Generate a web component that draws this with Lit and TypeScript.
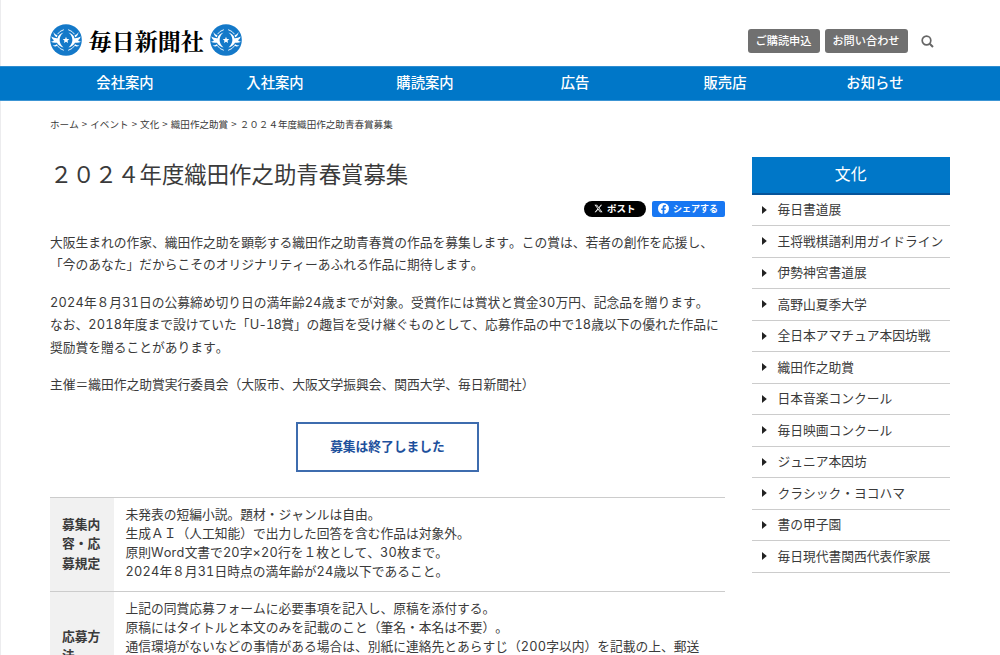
import { LitElement, html, svg, css } from "lit";
import { customElement } from "lit/decorators.js";

const NAV = ["会社案内", "入社案内", "購読案内", "広告", "販売店", "お知らせ"];
const SIDE = [
  "毎日書道展",
  "王将戦棋譜利用ガイドライン",
  "伊勢神宮書道展",
  "高野山夏季大学",
  "全日本アマチュア本因坊戦",
  "織田作之助賞",
  "日本音楽コンクール",
  "毎日映画コンクール",
  "ジュニア本因坊",
  "クラシック・ヨコハマ",
  "書の甲子園",
  "毎日現代書関西代表作家展",
];
const PARAS = [
  [
    "大阪生まれの作家、織田作之助を顕彰する織田作之助青春賞の作品を募集します。この賞は、若者の創作を応援し、",
    "「今のあなた」だからこそのオリジナリティーあふれる作品に期待します。",
  ],
  [
    "2024年８月31日の公募締め切り日の満年齢24歳までが対象。受賞作には賞状と賞金30万円、記念品を贈ります。",
    "なお、2018年度まで設けていた「U-18賞」の趣旨を受け継ぐものとして、応募作品の中で18歳以下の優れた作品に",
    "奨励賞を贈ることがあります。",
  ],
  ["主催＝織田作之助賞実行委員会（大阪市、大阪文学振興会、関西大学、毎日新聞社）"],
];
const TABLE = [
  {
    head: ["募集内", "容・応", "募規定"],
    body: [
      "未発表の短編小説。題材・ジャンルは自由。",
      "生成ＡＩ（人工知能）で出力した回答を含む作品は対象外。",
      "原則Word文書で20字×20行を１枚として、30枚まで。",
      "2024年８月31日時点の満年齢が24歳以下であること。",
    ],
  },
  {
    head: ["応募方", "法"],
    body: [
      "上記の同賞応募フォームに必要事項を記入し、原稿を添付する。",
      "原稿にはタイトルと本文のみを記載のこと（筆名・本名は不要）。",
      "通信環境がないなどの事情がある場合は、別紙に連絡先とあらすじ（200字以内）を記載の上、郵送",
    ],
  },
];

// Half-width runs get their own span so digits keep one wide advance.
const mixed = (s: string) =>
  s.split(/([A-Za-z0-9×-]+)/).map((part, i) => {
    if (i % 2 === 0) return part;
    const kind = /^[A-Z][a-z]/.test(part) ? "word" : part.startsWith("U") ? "num tight" : "num";
    return html`<span class=${kind}>${part}</span>`;
  });

const emblem = () => html`<svg class="emblem" viewBox="0 0 32 32">
  <circle cx="16" cy="16" r="15.8" fill="#1479c9" />
  ${[1, -1].map(
    (d) => svg`<g transform="translate(16 16) scale(${d} 1) translate(-16 -16)" fill="#fff">
      <path d="M1.200 12.500Q4.500 14.500 7.500 14.300Q8.500 10 13.500 8.600Q9.800 11.500 9.600 16Q9.800 20.500 13.500 23.400Q8.500 22 7 18.700Q3.500 19.300 .9 17.800Q3 17.300 4 16.300Q2 15 1.200 12.500Z"/>
      <path d="M3.400 8Q5 11 7.500 11.600L6.800 13.200Q4 12 3.400 8Z"/>
      <path d="M2.600 21.500Q5 21.600 6.800 20.200L8 21.600Q5.500 23.200 2.600 21.500Z"/>
      <path d="M13.800 5.700Q9.500 7 7.500 10.200" fill="none" stroke="#fff" stroke-width=".9"/>
      <path d="M13.800 26.300Q9.500 25 7.500 21.800" fill="none" stroke="#fff" stroke-width=".9"/>
    </g>`
  )}
  <path
    d="M16 12.700l.9 2.200 2.400.2-1.800 1.600.6 2.300-2.100-1.200-2.100 1.200.6-2.300-1.800-1.600 2.400-.2z"
    fill="#fff"
  />
</svg>`;

@customElement("app-root")
export class AppRoot extends LitElement {
  static styles = css`
    :host {
      display: block;
      height: 655px;
      overflow: hidden;
      box-sizing: border-box;
      background: #fff;
      color: #3a3a3a;
      font: 12.76px/22.5px "Noto Sans CJK JP", sans-serif;
      text-spacing-trim: space-all;
      font-kerning: none;
      white-space: nowrap;
    }
    .page { border-left: 1px solid #ececee; height: 655px; }
    .top {
      height: 65.5px;
      box-sizing: border-box;
      padding: 15px 66.500px 0 49px;
      display: flex;
      justify-content: space-between;
      align-items: center;
    }
    .logo { display: flex; align-items: center; color: #000; }
    .emblem { width: 32px; height: 32px; display: block; }
    .brand {
      font-size: 23.1px;
      line-height: 32px;
      font-weight: 700;
      font-family: "Noto Serif CJK JP", "Noto Sans CJK JP", serif;
      width: 115px;
      margin: 0 6.500px 0 6.500px;
    }
    .tools { display: flex; align-items: center; gap: 5px; padding-top: 2px; }
    .btn {
      height: 24px;
      line-height: 22px;
      border-radius: 3px;
      background: #707070;
      color: #fff;
      font-size: 11.2px;
      font-weight: 500;
      text-align: center;
      width: 72px;
    }
    .btn.wide { width: 83px; }
    .search { width: 13px; height: 13px; margin-left: 8px; display: block; }
    nav {
      display: grid;
      grid-template-columns: repeat(6, 150px);
      justify-content: center;
      margin-left: -1px;
      height: 35px;
      box-sizing: border-box;
      background: #0077c8;
      border-top: 1px solid #2f8dd0;
      border-bottom: 1px solid #3c95d4;
      color: #fff;
      font-size: 14.35px;
      font-weight: 500;
      line-height: 30px;
      text-align: center;
    }
    .crumbs {
      font-size: 9.57px;
      line-height: 14px;
      padding: 16px 0 1px 49px;
      display: flex;
      gap: 2.450px;
    }
    .gt { width: 6.700px; text-align: center; }
    .cols { display: flex; justify-content: space-between; padding: 25px 50px 0 49px; }
    main { width: 675px; }
    h1 { margin: 0; font-size: 22.4px; line-height: 32px; padding-bottom: 4px; font-weight: 400; }
    .share { display: flex; justify-content: flex-end; gap: 6px; margin: 8px 0 14px; }
    .x, .fb {
      display: flex;
      align-items: center;
      height: 16px;
      color: #fff;
      font-size: 9.500px;
      line-height: 15px;
      font-weight: 700;
      box-sizing: border-box;
    }
    .x { width: 62px; border-radius: 8px; background: #000; padding-left: 10px; gap: 4px; }
    .fb { width: 73px; border-radius: 2px; background: #1877f2; padding-left: 6px; gap: 4px; font-size: 9px; }
    .x svg { width: 9px; height: 9px; }
    .fb svg { width: 11px; height: 11px; }
    p { margin: 0 0 15px; }
    .num, .word { font-family: Inter, sans-serif; line-height: 1; letter-spacing: 0.200px; }
    .num { font-feature-settings: "tnum"; }
    .tight { letter-spacing: -0.700px; }
    .closed {
      width: 183px;
      height: 50px;
      box-sizing: border-box;
      margin: 26px auto 25px;
      border: 2px solid #3e6cae;
      color: #1d509c;
      font-weight: 700;
      line-height: 44px;
      text-align: center;
    }
    .row { display: flex; border-top: 1px solid #ccc; line-height: 19.150px; }
    .th {
      width: 64px;
      background: #f1f1f1;
      font-weight: 700;
      display: flex;
      flex-direction: column;
      justify-content: center;
      padding: 0 0 2px 12px;
      box-sizing: border-box;
    }
    .td { padding: 6.500px 0 9.900px 11.500px; }
    .row:last-child .td { padding-bottom: 45px; }
    aside { width: 198.500px; }
    .sideHead {
      height: 38px;
      box-sizing: border-box;
      background: #0077c8;
      border-bottom: 2px solid #06549a;
      color: #fff;
      font-size: 15.950px;
      line-height: 33px;
      text-align: center;
    }
    .item {
      display: flex;
      align-items: center;
      height: 31.500px;
      box-sizing: border-box;
      border-bottom: 1px solid #ccc;
      padding-left: 10px;
      line-height: 22px;
    }
    .item span { padding-bottom: 1.500px; }
    .item svg { width: 5px; height: 8px; margin-right: 11px; }
  `;

  render() {
    const crumbs = ["ホーム", "イベント", "文化", "織田作之助賞", "２０２４年度織田作之助青春賞募集"];
    return html`<div class="page">
      <header class="top">
        <div class="logo">${emblem()}<span class="brand">毎日新聞社</span>${emblem()}</div>
        <div class="tools">
          <span class="btn">ご購読申込</span>
          <span class="btn wide">お問い合わせ</span>
          <svg class="search" viewBox="0 0 13 13" fill="none" stroke="#666">
            <circle cx="5.500" cy="5.500" r="4.300" stroke-width="1.700" />
            <path d="M8.700 8.700L12 12" stroke-width="2" />
          </svg>
        </div>
      </header>
      <nav>${NAV.map((n) => html`<span>${n}</span>`)}</nav>
      <div class="crumbs">
        ${crumbs.map((c, i) => html`${i ? html`<span class="gt">&gt;</span>` : ""}<span>${c}</span>`)}
      </div>
      <div class="cols">
        <main>
          <h1>２０２４年度織田作之助青春賞募集</h1>
          <div class="share">
            <span class="x"
              ><svg viewBox="0 0 24 24" fill="#fff">
                <path
                  d="M18.200 2.200h3.400l-7.300 8.300 8.500 11.300h-6.700l-5.200-6.800-6 6.800H1.600l7.700-8.900L1.200 2.200H8l4.700 6.200zm-1.100 17.600h1.800L7 4.100H5z"
                /></svg
              >ポスト</span
            >
            <span class="fb"
              ><svg viewBox="0 0 24 24">
                <circle cx="12" cy="12" r="12" fill="#fff" />
                <path
                  d="M10 24v-8.500H7V12h3V9.400C10 6.300 11.800 4.600 14.600 4.600c1.300 0 2.700.25 2.700.25v3h-1.500c-1.500 0-2 .9-2 1.900V12h3.400l-.55 3.500h-2.850V24z"
                  fill="#1877f2"
                /></svg
              >シェアする</span
            >
          </div>
          ${PARAS.map((p) => html`<p>${p.map((l, i) => html`${i ? html`<br />` : ""}${mixed(l)}`)}</p>`)}
          <div class="closed">募集は終了しました</div>
          ${TABLE.map(
            (r) => html`<div class="row">
              <div class="th">${r.head.map((l) => html`<div>${l}</div>`)}</div>
              <div class="td">${r.body.map((l) => html`<div>${mixed(l)}</div>`)}</div>
            </div>`
          )}
        </main>
        <aside>
          <div class="sideHead">文化</div>
          ${SIDE.map(
            (s) => html`<div class="item">
              <svg viewBox="0 0 5 8"><path d="M0 0L4.800 4L0 8z" fill="#222" /></svg><span>${s}</span>
            </div>`
          )}
        </aside>
      </div>
    </div>`;
  }
}
